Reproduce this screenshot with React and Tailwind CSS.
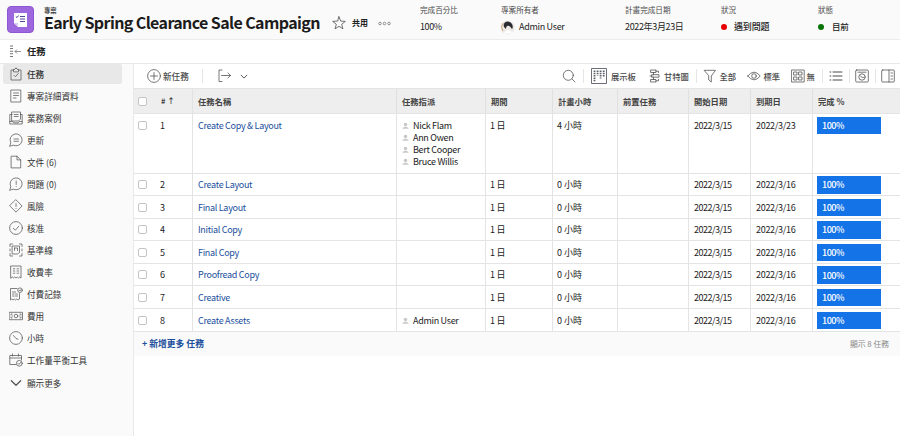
import React from 'react';

function Svg({ children, size = 14, className = '' }) {
  return (
    <svg width={size} height={size} viewBox="0 0 14 14" fill="none" stroke="currentColor" strokeWidth="0.75" strokeLinecap="round" strokeLinejoin="round" className={'shrink-0 ' + className}>
      {children}
    </svg>
  );
}

const nav = [
  { label: '任務', icon: <><path d="M4.5 3H2v10h10V3H9.500M4.500 4.500V2.500L6 2.200 7 .8l1 1.400 1.500.3v2z" /><path d="M5 8.300l1.500 1.500L9.200 6.500" /></> },
  { label: '專案詳細資料', icon: <path d="M2.200 1h9.600v12H2.200zM4.500 4h5M4.500 6.500h5M4.500 9h2.500" /> },
  { label: '業務案例', icon: <path d="M3 3.500H.8V13h12.400V3.500H11.500M3 1h8.500v7L9.500 10H3zM5.200 3.500h4M5.200 5.500h4M.8 10.500h3l1 1.300h4.400l1-1.300h3" /> },
  { label: '更新', icon: <path d="M.8 13l1-3.300A6 6 0 1 1 4.500 12.300zM5 6h4.500M5 8.300h4.500" /> },
  { label: '文件 (6)', icon: <path d="M2.500 1.200h5.500l3.700 3.700v8H2.500zM8 1.200v3.700h3.700" /> },
  { label: '問題 (0)', icon: <path d="M.8 13l1-3.300A6 6 0 1 1 4.500 12.300zM7.200 4v3.500M7.200 9.500v.1" /> },
  { label: '風險', icon: <path d="M7 .9L13.100 7 7 13.100.9 7zM7 4.500v3M7 9.500v.1" /> },
  { label: '核准', icon: <><circle cx="7" cy="7" r="6.400" /><path d="M4.300 7.200l2 2 3.500-4" /></> },
  { label: '基準線', icon: <path d="M1 3.500V1h2.500M10.500 1H13v2.500M13 10.500V13h-2.500M3.500 13H1v-2.500M3.500 3h7v6.500L8.500 11h-5zM5.500 5v2.500M5.500 5h3v2.500M1 6v2M13 6v2" /> },
  { label: '收費率', icon: <><path d="M2 1h10v12l-1.300-1-1.200 1-1.200-1L7 13l-1.300-1-1.200 1-1.200-1L2 13z" /><path d="M4.300 3.800h1.500M8 3.800h1.700M4.300 6h1.500M8 6h1.700M4.300 8.200h1.500M8 8.200h1.700" /></> },
  { label: '付費記錄', icon: <><path d="M8 1.500H1.500V13l1.200-1 1.300 1 1.300-1 1.200 1 1.300-1 1.200 1 1.500-1V6.500M3.500 5h3M3.500 7h1.500M6.500 7h2M3.500 9h1.500M6.500 9h2" /><circle cx="11" cy="3.200" r="2.300" /><path d="M10 3.200l.8.800 1.200-1.400" /></> },
  { label: '費用', icon: <><path d="M.5 3.300h13v7.400H.5z" /><circle cx="7" cy="7" r="1.800" /><path d="M2 6V5h1M11 5h1v1M12 8v1h-1M3 9H2V8M3.300 7h.2M10.500 7h.2" /></> },
  { label: '小時', icon: <><circle cx="7" cy="7" r="6.400" /><path d="M4.500 4.500L7 7.500l2 .7" /></> },
  { label: '工作量平衡工具', icon: <><path d="M7 11.500H.8V2.500h11.700V7M.8 5h11.700M3.500 1v2M9.500 1v2" /><circle cx="10.300" cy="10.300" r="2.900" /><path d="M9 10.400l1 1 1.600-2" /></> },
  { label: '顯示更多', icon: <path strokeWidth="1.300" d="M2.300 4.800L7 9.300l4.700-4.500" /> },
];

const rows = [
  ['Create Copy & Layout', '4', '2022/3/23', ['Nick Flam', 'Ann Owen', 'Bert Cooper', 'Bruce Willis']],
  ['Create Layout', '0', '2022/3/16', []],
  ['Final Layout', '0', '2022/3/16', []],
  ['Initial Copy', '0', '2022/3/16', []],
  ['Final Copy', '0', '2022/3/16', []],
  ['Proofread Copy', '0', '2022/3/16', []],
  ['Creative', '0', '2022/3/16', []],
  ['Create Assets', '0', '2022/3/16', ['Admin User']],
];

const columns = 'grid grid-cols-[59px_204px_89px_67px_65px_71px_62px_62px_1fr]';

function Checkbox() {
  return <span className="size-[9px] shrink-0 rounded-[2px] border border-[#c4c4c4] bg-white" />;
}

function Person({ name }) {
  return (
    <div className="flex h-[12.200px] items-center gap-[4px]">
      <svg width="7" height="8" viewBox="0 0 7 8" className="shrink-0 fill-[#c9c9c9]"><circle cx="3.500" cy="2.500" r="1.800" /><path d="M.5 6.800V6l2-1.200h2l2 1.200v.8z" /></svg>
      <span className="tracking-[-0.3px]">{name}</span>
    </div>
  );
}

function Row({ row, index }) {
  const [name, hours, due, people] = row;
  const cell = 'border-r border-[#e4e4e4] pt-[5.500px]';
  return (
    <div className={columns + ' border-b border-[#e4e4e4] text-[9px] leading-3 text-[#222] ' + (index === 0 ? 'h-[59.500px]' : 'h-[22.600px]')}>
      <div className={cell + ' flex items-start pl-[4px]'}><span className="-mt-[0.500px] flex h-3 w-[22px] items-center"><Checkbox /></span>{index + 1}</div>
      <div className={cell + ' pl-[5px] tracking-[-0.3px] text-[#1b4f9c]'}>{name}</div>
      <div className={cell + ' pl-[5px]'}>{people.map((p) => <Person key={p} name={p} />)}</div>
      <div className={cell + ' pl-[4px] tracking-[-0.2px]'}>1 日</div>
      <div className={cell + ' pl-[4px]'}>{hours} 小時</div>
      <div className={cell} />
      <div className={cell + ' pl-[5px] tracking-[-0.5px]'}>2022/3/15</div>
      <div className={cell + ' pl-[5px] tracking-[-0.3px]'}>{due}</div>
      <div className="pl-[4px] pt-[2.500px]"><div className="flex h-[17.500px] w-[64px] items-center bg-[#1473e6] pl-[5px] pt-px font-medium tracking-[-0.5px] text-white">100%</div></div>
    </div>
  );
}

function Stat({ label, className = '', children }) {
  return (
    <div className={'shrink-0 pt-1 text-[7.600px] leading-3 text-[#4a4a4a] ' + className}>
      <div>{label}</div>
      <div className="mt-[3px] flex h-4 items-center text-[9px] tracking-[-0.15px] text-[#222]">{children}</div>
    </div>
  );
}

function Separator({ className = '' }) {
  return <span className={'h-3.5 w-px shrink-0 bg-[#e6e6e6] ' + className} />;
}

function Toolbar() {
  return (
    <div className="flex h-6 items-center whitespace-nowrap text-[8.300px] font-medium text-[#4b4b4b]">
      <div className="flex w-[68px] shrink-0 items-center gap-[2px] pl-[13px] text-[8.600px]"><Svg><circle cx="7" cy="7" r="6.400" /><path d="M7 3.500v7M3.500 7h7" /></Svg>新任務</div>
      <Separator />
      <Svg className="ml-[15px]"><path d="M4 1H1v11.500h3M3.500 6.500h9M10 4l2.500 2.500L10 9" /></Svg>
      <Svg size={10} className="ml-[7px] mt-[2px]"><path strokeWidth="1.300" d="M3 4.500L7 8.500l4-4" /></Svg>
      <div className="flex flex-1 items-center pl-[313px]">
        <div className="w-[21px] shrink-0"><Svg><circle cx="6.300" cy="6.300" r="5" /><path d="M10 10l3 3" /></Svg></div>
        <Separator />
        <div className="flex w-[64px] shrink-0 items-center gap-[4px] pl-[7px]">
          <svg width="16" height="16" viewBox="0 0 16 16" fill="none" stroke="#5b5f6a" className="shrink-0"><path strokeWidth=".9" d="M.5.5h15v15H.5z" /><path strokeWidth="1.800" strokeDasharray="1.500 .8" d="M3.500 2.500v11M6.600 2.500v5M9.600 2.500v8M12.700 2.500v6" /></svg>
          展示板
        </div>
        <div className="flex w-[47.500px] shrink-0 items-center gap-[2px]"><Svg><path d="M3 1h5v2.500H3zM4 5.700h7v2.500H4zM3 10.500h5V13H3zM5.500 3.500v2.200M5.500 8.200v2.300M8 2.200h2.500v1.300M4 7H2M8 11.800h2.500v-1.500" /></Svg>甘特圖</div>
        <Separator />
        <div className="flex w-[50px] shrink-0 items-center gap-[3px] pl-[6px]"><Svg><path d="M1.500 1.300h11L8.300 7v6L5.700 11V7z" /></Svg>全部</div>
        <div className="flex w-[44px] shrink-0 items-center gap-[3px]"><Svg><path d="M.8 7Q7-.8 13.200 7 7 14.800.8 7z" /><circle cx="7" cy="7" r="2.300" /></Svg>標準</div>
        <div className="flex w-[31px] shrink-0 items-center gap-[2px]"><Svg><path d="M.8 1h12.400v12H.8zM3 3h3v3H3zM8 3h3v3H8zM3 8h3v3H3zM8 8h3v3H8z" /></Svg>無</div>
        <Separator />
        <Svg className="ml-[6px]"><path strokeWidth="1" d="M1 3h.8M4 3h9M1 7h.8M4 7h9M1 11h.8M4 11h9" /></Svg>
        <Separator className="ml-[6px]" />
        <Svg className="ml-[5px]"><rect x=".7" y="1" width="12.600" height="12" rx="1" /><path d="M3 3.200h8" /><circle cx="7" cy="8" r="3.200" /><path d="M5.500 7L7 8.300l1.500.2" /></Svg>
        <Separator className="ml-[6px]" />
        <Svg className="ml-[5px]"><rect x=".7" y="1" width="12.600" height="12" rx="1" /><path d="M8 1v12M10 4h1.500M10 7h1.500M10 10h1.500" /></Svg>
      </div>
    </div>
  );
}

export default function App() {
  return (
    <div lang="zh-Hant" className="flex h-[436px] w-[900px] flex-col overflow-hidden whitespace-nowrap bg-white font-['Noto_Sans_CJK_TC',sans-serif] text-[#222]">
      <header className="flex h-10 shrink-0 border-b border-[#ececec] bg-[#fafafa] pl-[7px]">
        <div className="mt-[6px] flex size-[27px] shrink-0 items-center justify-center rounded-[4px] border border-[#8e55d4] bg-[#9d67dd]">
          <svg width="15" height="16" viewBox="0 0 15 16"><path d="M1 1h13v14H5l-4-4z" fill="#fff" /><path d="M1 11h4v4z" fill="#d9c8f0" /><path d="M7 4.500h5M7 7h5M7 9.500h5M2.800 4.500l1.200 1 1.600-2" stroke="#53469a" fill="none" /></svg>
        </div>
        <div className="ml-[10px] w-[290px] shrink-0 pt-[6px]">
          <div className="text-[6.300px] font-bold leading-[9px] text-[#444]">專案</div>
          <h1 className="text-[16px] font-bold leading-[15px] tracking-[-0.610px] text-[#1c1c1c]">Early Spring Clearance Sale Campaign</h1>
        </div>
        <div className="flex h-[46px] w-[86px] shrink-0 items-center text-[8px] font-bold">
          <Svg className="-ml-[2px] text-[#444]"><path d="M7 .8l1.700 4.300 4.600.3-3.600 2.900 1.200 4.500L7 10.300l-3.900 2.500 1.200-4.500L.7 5.400l4.600-.3z" /></Svg>
          <span className="ml-[6px]">共用</span>
          <svg width="13" height="5" viewBox="0 0 13 5" fill="none" stroke="#777" strokeWidth=".8" className="ml-[10px]"><circle cx="2" cy="2.500" r="1.300" /><circle cx="6.500" cy="2.500" r="1.300" /><circle cx="11" cy="2.500" r="1.300" /></svg>
        </div>
        <Stat label="完成百分比" className="w-[81px]"><span className="tracking-[-0.4px]">100%</span></Stat>
        <Stat label="專案所有者" className="w-[124px]">
          <svg width="15" height="15" viewBox="0 0 15 15" className="-ml-[1px] mr-[4px] shrink-0"><circle cx="7.500" cy="7.500" r="7" fill="#ece9e6" /><path d="M4 7c-2-5 5-8 8-3 1 2 1 4 0 5-1-1-1-2-3-3-2-1-3 1-3 3z" fill="#292b30" /><path d="M3 3l-1.500 4L3 11" stroke="#caa57e" fill="none" /><path d="M4 14q1-4 4-4t4 3" fill="#fff" /></svg>
          <span className="tracking-[-0.3px]">Admin User</span>
        </Stat>
        <Stat label="計畫完成日期" className="w-[96px]"><span className="tracking-[-0.350px]">2022年3月23日</span></Stat>
        <Stat label="狀況" className="w-[97px]"><span className="mr-[7px] size-[6px] rounded-full bg-[#e60000]" /><span className="font-medium">遇到問題</span></Stat>
        <Stat label="狀態"><span className="mr-[8px] size-[6px] rounded-full bg-[#087408]" /><span className="-mt-[3px] text-[8.500px] font-medium">目前</span></Stat>
      </header>
      <div className="flex h-6 shrink-0 items-center border-b border-[#e9e9e9] pl-[9px] text-[9.300px] font-bold">
        <svg width="13" height="13" viewBox="0 0 13 13" fill="none" stroke="#777" className="mr-[5px]"><path strokeWidth="3" strokeDasharray="1 1.600" d="M2.500.5v12" /><path strokeWidth=".8" d="M12 6.500H6M8 4.500l-2 2 2 2" /></svg>
        任務
      </div>
      <div className="flex min-h-0 flex-1">
        <nav className="w-[134px] shrink-0 border-r border-[#e9e9ed] bg-[#fafafa] pl-[3px] text-[8.600px] text-[#333]">
          {nav.map((item, i) => (
            <div key={item.label} className={'flex w-[119px] items-center gap-[4px] rounded-[2px] pl-[6px] ' + (i === 0 ? 'mb-[1px] h-5 bg-[#e8e8e8] font-medium' : i === 14 ? 'mt-[1px] h-[22px]' : 'h-[22px]')}>
              <Svg className="text-[#555]">{item.icon}</Svg>
              {item.label}
            </div>
          ))}
        </nav>
        <main className="min-w-0 flex-1">
          <Toolbar />
          <div className={columns + ' h-[26px] border-y border-[#e4e4e4] bg-[#eee] text-[8.300px] font-bold text-[#444]'}>
            <div className="flex items-center border-r border-[#e2e2e2] pl-[4px]"><span className="flex w-[23px]"><Checkbox /></span><span className="text-[7.500px]"># ↑</span></div>
            {['任務名稱', '任務指派', '期間', '計畫小時', '前置任務', '開始日期', '到期日', '完成 %'].map((label) => (
              <div key={label} className="flex items-center border-r border-[#e0e0e0] pl-[5px] last:border-r-0">{label}</div>
            ))}
          </div>
          {rows.map((row, i) => <Row key={row[0]} row={row} index={i} />)}
          <div className="flex h-6 items-center justify-between bg-[#fafafa] pl-[8px] pr-[11px] text-[8.800px]">
            <span className="font-bold text-[#1b4f9c]">+ 新增更多 任務</span>
            <span className="text-[7.800px] text-[#888]">顯示 8 任務</span>
          </div>
        </main>
      </div>
    </div>
  );
}
